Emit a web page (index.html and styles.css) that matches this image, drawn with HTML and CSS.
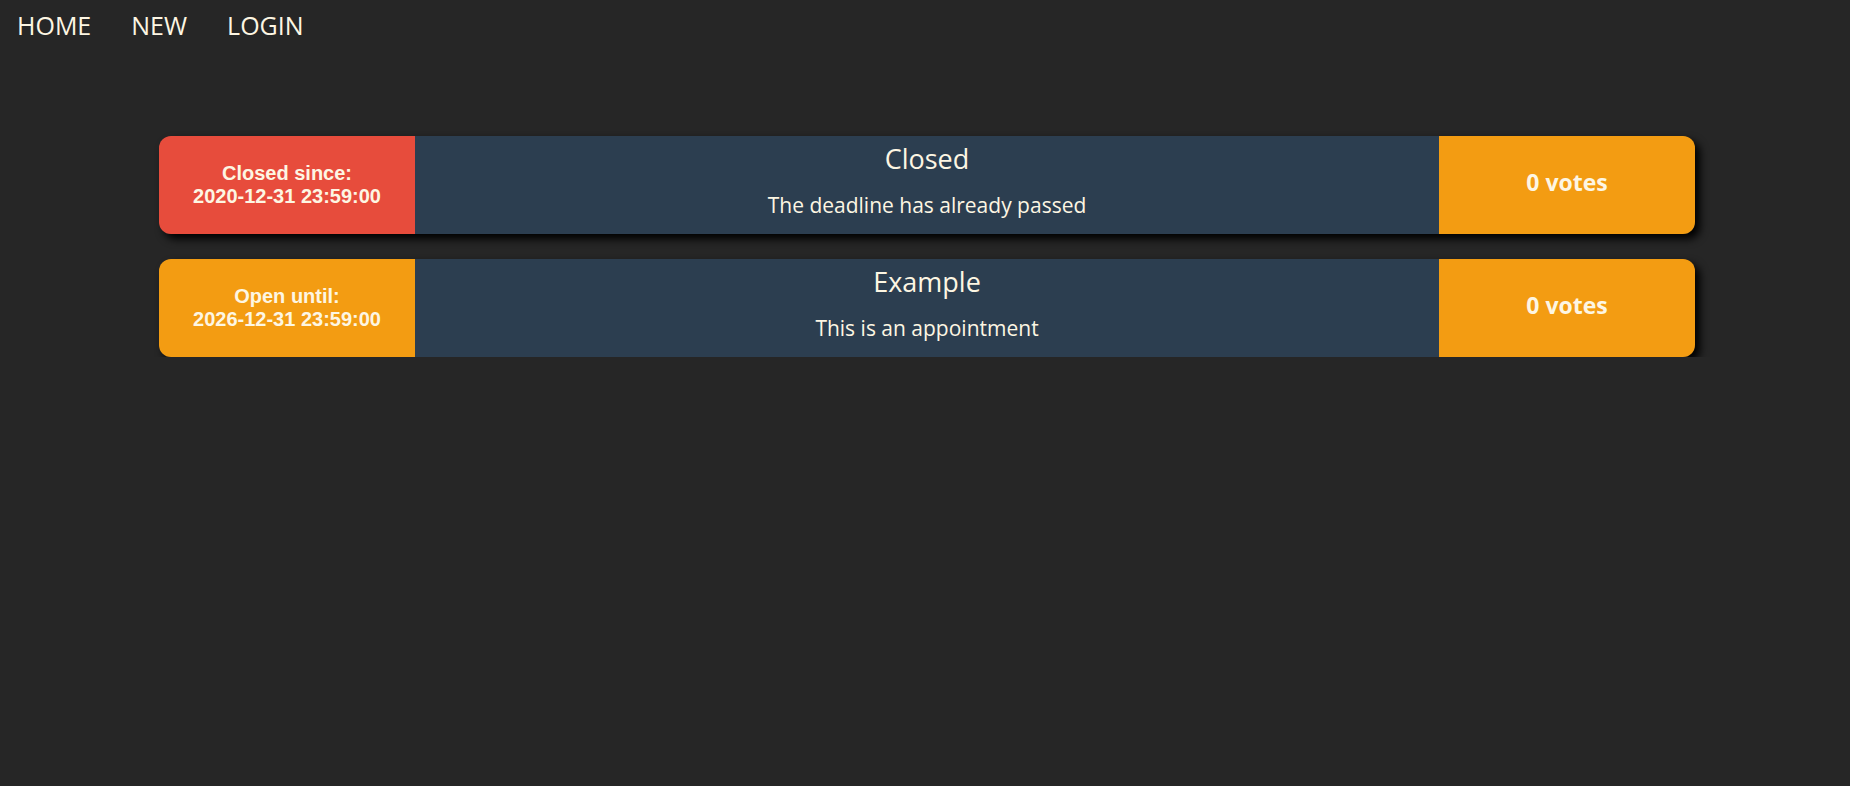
FILE: index.html
```html
<!DOCTYPE html>
<html lang="en">
<head>
<meta charset="utf-8">
<title>Appointments</title>
<link rel="stylesheet" href="styles.css">
</head>
<body>
<nav class="nav">
  <a class="nav-link" href="#">HOME</a>
  <a class="nav-link" href="#">NEW</a>
  <a class="nav-link" href="#">LOGIN</a>
</nav>
<main class="list">
  <div class="card">
    <div class="status status-closed">
      <span>Closed since:</span>
      <span>2020-12-31 23:59:00</span>
    </div>
    <div class="info">
      <div class="title">Closed</div>
      <div class="desc">The deadline has already passed</div>
    </div>
    <div class="votes">0 votes</div>
  </div>
  <div class="card">
    <div class="status status-open">
      <span>Open until:</span>
      <span>2026-12-31 23:59:00</span>
    </div>
    <div class="info">
      <div class="title">Example</div>
      <div class="desc">This is an appointment</div>
    </div>
    <div class="votes">0 votes</div>
  </div>
</main>
</body>
</html>
```

FILE: styles.css
```css
html, body {
  margin: 0;
  padding: 0;
}
body {
  background: #262626;
  color: #fdf6e3;
  font-family: "Open Sans", "Liberation Sans", sans-serif;
}
.nav {
  display: flex;
  gap: 40px;
  padding: 8px 17px 8px;
}
.nav-link {
  color: #fdf6e3;
  text-decoration: none;
  font-size: 25px;
  line-height: 34px;
}
.list {
  width: 1536px;
  margin: 86px 0 0 159px;
  display: flex;
  flex-direction: column;
  gap: 25px;
}
.card {
  display: flex;
  height: 98px;
  border-radius: 12px;
  overflow: hidden;
  box-shadow: 5px 5px 8px #000;
}
.status {
  width: 256px;
  flex: none;
  display: flex;
  flex-direction: column;
  align-items: center;
  justify-content: center;
  font-family: "Liberation Sans", Arial, sans-serif;
  font-weight: 700;
  font-size: 20px;
  line-height: 23px;
}
.status-closed { background: #e74c3c; }
.status-open { background: #f39c12; }
.info {
  flex: 1;
  background: #2c3e50;
  text-align: center;
  padding-top: 6px;
}
.title {
  font-size: 27px;
  line-height: 34px;
}
.desc {
  font-size: 21px;
  line-height: 28px;
  margin-top: 15px;
}
.votes {
  width: 256px;
  flex: none;
  background: #f39c12;
  display: flex;
  align-items: center;
  justify-content: center;
  font-weight: 700;
  font-size: 23px;
  padding-bottom: 6px;
  box-sizing: border-box;
}
```
